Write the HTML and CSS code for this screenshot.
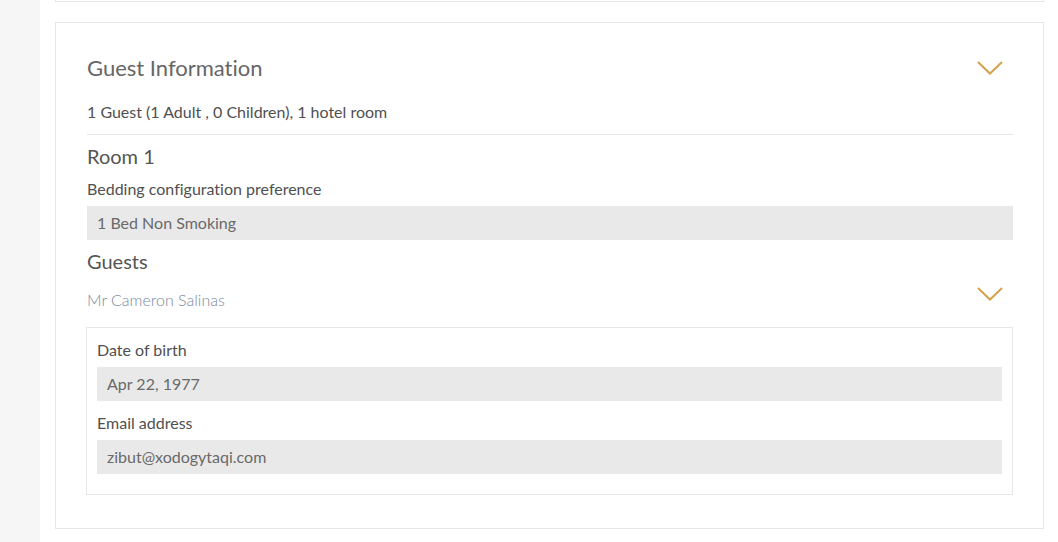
FILE: index.html
```html
<!DOCTYPE html>
<html lang="en">
<head>
    <meta charset="UTF-8">
    <meta name="viewport" content="width=device-width, initial-scale=1.0">
    <title>Guest Information</title>
    <link rel="stylesheet" href="styles.css">
</head>
<body>
    <div class="sidebar"></div>
    <div class="main">
        <div class="card-prev"></div>
        <div class="card">
            <div class="card-header">
                <h2 class="card-title">Guest Information</h2>
                <svg class="chevron" width="26" height="14" viewBox="0 0 26 14">
                    <path d="M1 1 L13 12.5 L25 1" fill="none" stroke="#d4a24c" stroke-width="2"/>
                </svg>
            </div>
            <p class="summary">1 Guest (1 Adult , 0 Children), 1 hotel room</p>
            <h3 class="section-title room-title">Room 1</h3>
            <div class="label">Bedding configuration preference</div>
            <div class="field">1 Bed Non Smoking</div>
            <h3 class="section-title guests-title">Guests</h3>
            <div class="guest-row">
                <span class="guest-name">Mr Cameron Salinas</span>
                <svg class="chevron" width="26" height="14" viewBox="0 0 26 14">
                    <path d="M1 1 L13 12.5 L25 1" fill="none" stroke="#d4a24c" stroke-width="2"/>
                </svg>
            </div>
            <div class="guest-details">
                <div class="label">Date of birth</div>
                <div class="field">Apr 22, 1977</div>
                <div class="label label-next">Email address</div>
                <div class="field">zibut@xodogytaqi.com</div>
            </div>
        </div>
    </div>
</body>
</html>
```

FILE: styles.css
```css
body {
    margin: 0;
    display: flex;
    min-height: 100vh;
    font-family: Lato, "Open Sans", sans-serif;
    font-variant-ligatures: no-common-ligatures;
    color: #505050;
    background-color: #fff;
}
.sidebar {
    width: 40px;
    flex-shrink: 0;
    background-color: #f6f6f6;
}
.main {
    flex: 1;
    padding: 0 14px 0 15px;
}
.card-prev {
    height: 1px;
    border: 1px solid #e6e6e6;
    border-top: none;
}
.card {
    margin-top: 20px;
    border: 1px solid #e6e6e6;
    padding: 30px 30px 33px 31px;
}
.card-header {
    display: flex;
    justify-content: space-between;
    align-items: center;
    padding-right: 10px;
}
.card-title {
    margin: 0;
    font-size: 22px;
    font-weight: normal;
    line-height: 30px;
    color: #666;
}
.chevron {
    display: block;
}
.summary {
    margin: 18px 0 0;
    font-size: 16px;
    line-height: 22px;
    padding-bottom: 11px;
    border-bottom: 1px solid #e6e6e6;
}
.section-title {
    margin: 9px 0 0;
    font-size: 20px;
    font-weight: normal;
    line-height: 24px;
    color: #555;
}
.label {
    margin-top: 10px;
    font-size: 16px;
    line-height: 22px;
    color: #505050;
}
.field {
    margin-top: 6px;
    height: 34px;
    line-height: 34px;
    padding: 0 10px;
    background-color: #e9e9e9;
    font-size: 16px;
    color: #6a6a6a;
}
.guest-row {
    display: flex;
    justify-content: space-between;
    align-items: center;
    margin-top: 16px;
    padding-right: 10px;
}
.guest-name {
    font-size: 16px;
    font-weight: 300;
    line-height: 22px;
    color: #7889a0;
}
.guest-row .chevron {
    margin-top: -12px;
}
.guest-details {
    margin: 16px 0 0 -1px;
    border: 1px solid #e6e6e6;
    padding: 11px 10px 20px;
}
.guest-details .label {
    margin-top: 0;
}
.guest-details .label-next {
    margin-top: 11px;
}
```
